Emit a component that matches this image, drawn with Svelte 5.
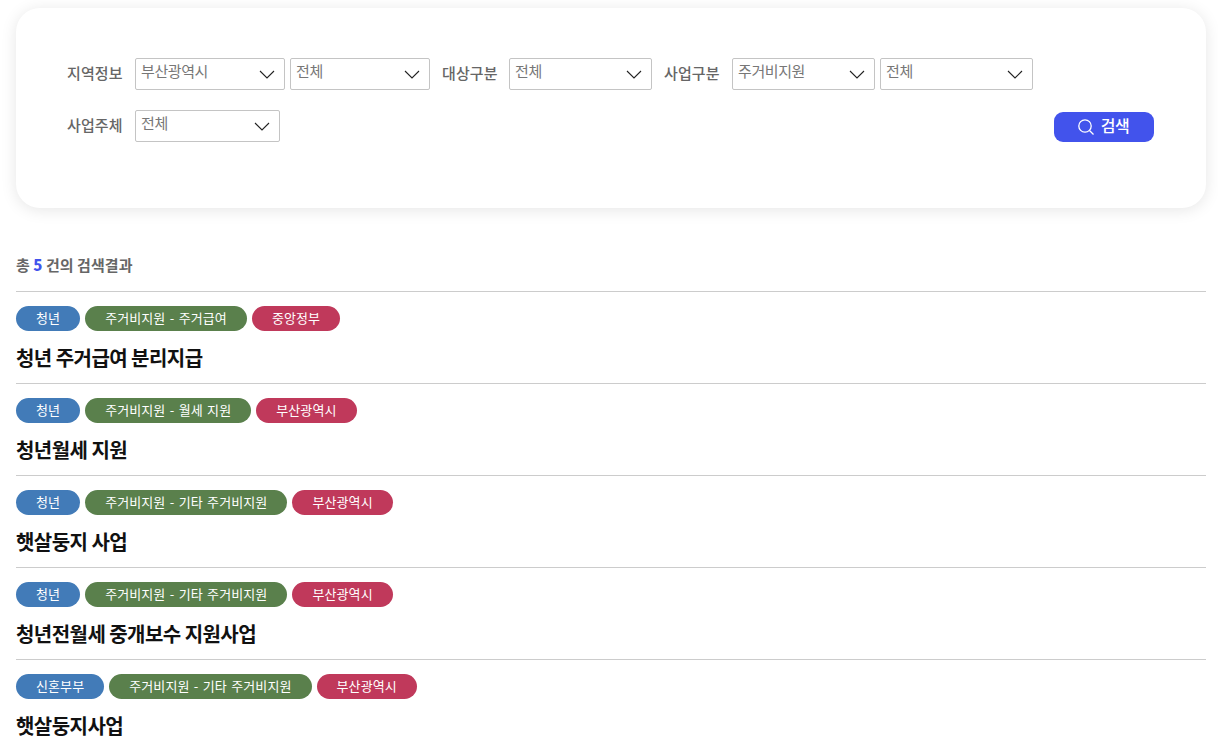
<script>
  const results = [
    { target: '청년', kind: '주거비지원 - 주거급여', org: '중앙정부', title: '청년 주거급여 분리지급' },
    { target: '청년', kind: '주거비지원 - 월세 지원', org: '부산광역시', title: '청년월세 지원' },
    { target: '청년', kind: '주거비지원 - 기타 주거비지원', org: '부산광역시', title: '햇살둥지 사업' },
    { target: '청년', kind: '주거비지원 - 기타 주거비지원', org: '부산광역시', title: '청년전월세 중개보수 지원사업' },
    { target: '신혼부부', kind: '주거비지원 - 기타 주거비지원', org: '부산광역시', title: '햇살둥지사업' }
  ];
</script>

{#snippet picker(value, width)}
  <div class="picker" style="width: {width}px">
    <select>
      <option>{value}</option>
    </select>
    <svg class="chevron" width="16" height="9" viewBox="0 0 16 9" fill="none" stroke="#222" stroke-width="1.1">
      <path d="M1 1l7 7 7-7" />
    </svg>
  </div>
{/snippet}

<main class="page">
  <section class="panel">
    <div class="row">
      <span class="label">지역정보</span>
      {@render picker('부산광역시', 150)}
      {@render picker('전체', 140)}
      <span class="label next short">대상구분</span>
      {@render picker('전체', 143)}
      <span class="label next">사업구분</span>
      {@render picker('주거비지원', 143)}
      {@render picker('전체', 153)}
    </div>
    <div class="row">
      <span class="label">사업주체</span>
      {@render picker('전체', 145)}
      <button class="search">
        <svg width="18" height="18" viewBox="0 0 18 18" fill="none" stroke="#fff" stroke-width="1.3">
          <circle cx="8" cy="8" r="6.2" />
          <path d="M12.5 12.5l4 4" />
        </svg>
        검색
      </button>
    </div>
  </section>

  <p class="count">총 <b>5</b> 건의 검색결과</p>

  <ul class="list">
    {#each results as item}
      <li class="item">
        <div class="tags">
          <span class="tag blue">{item.target}</span>
          <span class="tag green">{item.kind}</span>
          <span class="tag red">{item.org}</span>
        </div>
        <h3>{item.title}</h3>
      </li>
    {/each}
  </ul>
</main>

<style>
  :global(body) {
    margin: 0;
    background: #fff;
    overflow: hidden;
    font-family: "Noto Sans CJK KR", "Noto Sans", sans-serif;
  }
  .page {
    padding: 8px 12px 0 16px;
    height: 740px;
    overflow: hidden;
  }
  .panel {
    box-sizing: border-box;
    height: 200px;
    padding: 50px 52px;
    border-radius: 24px;
    background: #fff;
    box-shadow: 0 2px 16px rgba(0, 0, 0, 0.1);
  }
  .row {
    display: flex;
    align-items: center;
    gap: 5px;
    height: 32px;
    margin-bottom: 20px;
  }
  .label {
    width: 63px;
    margin-left: -1px;
    padding-bottom: 4px;
    font-size: 15px;
    font-weight: 500;
    letter-spacing: 0.1px;
    white-space: nowrap;
    color: #666;
  }
  .label.next {
    margin-left: 7px;
  }
  .label.short {
    width: 62px;
  }
  .picker {
    position: relative;
    height: 32px;
  }
  select {
    display: block;
    box-sizing: border-box;
    width: 100%;
    height: 100%;
    padding: 0 0 7px 5px;
    appearance: none;
    border: 1px solid #c4c4c4;
    border-radius: 2px;
    background: #fff;
    font: inherit;
    font-size: 15px;
    letter-spacing: -0.4px;
    color: #777;
  }
  .chevron {
    position: absolute;
    top: 12px;
    right: 10px;
    pointer-events: none;
  }
  .search {
    display: flex;
    align-items: center;
    justify-content: center;
    gap: 6px;
    width: 100px;
    height: 30px;
    margin: 2px 0 0 auto;
    padding: 0 2px 4px 0;
    border: 0;
    border-radius: 9px;
    background: #4253ec;
    color: #fff;
    font: inherit;
    font-size: 16px;
    font-weight: 500;
    letter-spacing: -0.4px;
  }
  .search svg {
    margin-top: 4px;
  }
  .count {
    margin: 46px 0 0;
    height: 37px;
    font-size: 15px;
    font-weight: 700;
    line-height: 22px;
    letter-spacing: 0.05px;
    color: #666;
  }
  .count b {
    color: #4253ec;
  }
  .list {
    margin: 0;
    padding: 0;
    list-style: none;
  }
  .item {
    box-sizing: border-box;
    height: 92px;
    padding-top: 14px;
    border-top: 1px solid #ccc;
  }
  .tags {
    display: flex;
    gap: 5px;
  }
  .tag {
    padding: 0 20px;
    height: 25px;
    border-radius: 13px;
    font-size: 13px;
    line-height: 23px;
    letter-spacing: 0.1px;
    word-spacing: 1.3px;
    color: #fff;
  }
  .blue {
    background: #427bb8;
  }
  .green {
    background: #5a804c;
  }
  .red {
    background: #c0395b;
  }
  h3 {
    margin: 12px 0 0;
    font-size: 20px;
    font-weight: 700;
    line-height: 30px;
    letter-spacing: -0.55px;
    color: #111;
  }
</style>
